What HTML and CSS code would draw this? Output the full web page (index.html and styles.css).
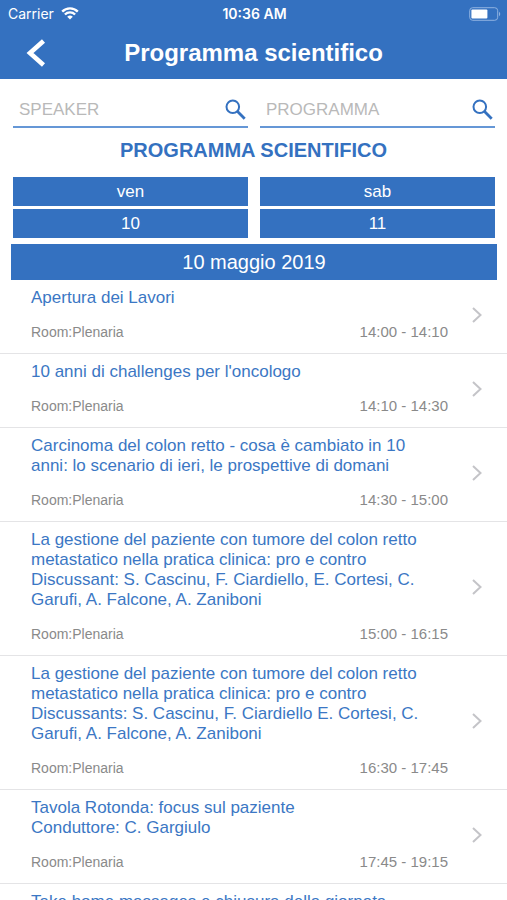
FILE: index.html
```html
<!DOCTYPE html>
<html lang="it">
<head>
  <meta charset="UTF-8" />
  <meta name="viewport" content="width=device-width, initial-scale=1.0"/>
  <title>Programma scientifico</title>
  <link rel="stylesheet" href="styles.css">
</head>
<body>
  <header class="header">
    <div class="status-bar">
      <div class="carrier">
        <span>Carrier</span>
        <svg width="18" height="13" viewBox="0 0 18 13" fill="none" stroke="#fff" stroke-width="2.4">
          <path d="M1.2 4.6a11 11 0 0 1 15.6 0"/>
          <path d="M3.9 7.5a7.2 7.2 0 0 1 10.2 0"/>
          <path d="M9 12.6L6.2 9.8a4 4 0 0 1 5.6 0z" fill="#fff" stroke="none"/>
        </svg>
      </div>
      <div class="clock">10:36 AM</div>
      <div class="battery">
        <svg width="32" height="14" viewBox="0 0 32 14">
          <rect x="0.7" y="0.7" width="28" height="12.6" rx="3" fill="none" stroke="#8fb2e0" stroke-width="1"/>
          <rect x="2.4" y="2.4" width="16" height="9.2" rx="1" fill="#fff"/>
          <path d="M30 4.8c1.7 0.8 1.7 3.6 0 4.4z" fill="#8fb2e0"/>
        </svg>
      </div>
    </div>
    <div class="nav-bar">
      <button class="back" type="button" aria-label="Indietro">
        <svg width="20" height="28" viewBox="0 0 20 28" fill="none" stroke="#fff" stroke-width="4.6">
          <path d="M17.5 2L4 14l13.5 12"/>
        </svg>
      </button>
      <h1>Programma scientifico</h1>
    </div>
  </header>

  <main class="content">
    <form class="search">
      <div class="field">
        <input type="text" placeholder="SPEAKER" aria-label="Speaker">
        <button type="button" aria-label="Cerca speaker">
          <svg width="21" height="21" viewBox="0 0 21 21" fill="none" stroke="#3471c0">
            <circle cx="7.8" cy="7.8" r="6.3" stroke-width="2"/>
            <path d="M12.3 12.3L19.7 19.7" stroke-width="2.8"/>
          </svg>
        </button>
      </div>
      <div class="field">
        <input type="text" placeholder="PROGRAMMA" aria-label="Programma">
        <button type="button" aria-label="Cerca programma">
          <svg width="21" height="21" viewBox="0 0 21 21" fill="none" stroke="#3471c0">
            <circle cx="7.8" cy="7.8" r="6.3" stroke-width="2"/>
            <path d="M12.3 12.3L19.7 19.7" stroke-width="2.8"/>
          </svg>
        </button>
      </div>
    </form>

    <h2>PROGRAMMA SCIENTIFICO</h2>

    <div class="days">
      <button class="day" type="button"><span>ven</span><span>10</span></button>
      <button class="day" type="button"><span>sab</span><span>11</span></button>
    </div>

    <h3 class="date">10 maggio 2019</h3>

    <div class="sessions">
      <a class="session" href="#">
        <div class="info">
          <div class="title">Apertura dei Lavori</div>
          <div class="meta"><span>Room:Plenaria</span><span class="time">14:00 - 14:10</span></div>
        </div>
        <svg class="chevron" viewBox="0 0 10 16"><path d="M1 1l7.5 7L1 15"/></svg>
      </a>
      <a class="session" href="#">
        <div class="info">
          <div class="title">10 anni di challenges per l'oncologo</div>
          <div class="meta"><span>Room:Plenaria</span><span class="time">14:10 - 14:30</span></div>
        </div>
        <svg class="chevron" viewBox="0 0 10 16"><path d="M1 1l7.5 7L1 15"/></svg>
      </a>
      <a class="session" href="#">
        <div class="info">
          <div class="title">Carcinoma del colon retto - cosa è cambiato in 10 anni: lo scenario di ieri, le prospettive di domani</div>
          <div class="meta"><span>Room:Plenaria</span><span class="time">14:30 - 15:00</span></div>
        </div>
        <svg class="chevron" viewBox="0 0 10 16"><path d="M1 1l7.5 7L1 15"/></svg>
      </a>
      <a class="session" href="#">
        <div class="info">
          <div class="title">La gestione del paziente con tumore del colon retto metastatico nella pratica clinica: pro e contro<br>Discussant: S. Cascinu, F. Ciardiello, E. Cortesi, C. Garufi, A. Falcone, A. Zaniboni</div>
          <div class="meta"><span>Room:Plenaria</span><span class="time">15:00 - 16:15</span></div>
        </div>
        <svg class="chevron" viewBox="0 0 10 16"><path d="M1 1l7.5 7L1 15"/></svg>
      </a>
      <a class="session" href="#">
        <div class="info">
          <div class="title">La gestione del paziente con tumore del colon retto metastatico nella pratica clinica: pro e contro<br>Discussants: S. Cascinu, F. Ciardiello E. Cortesi, C. Garufi, A. Falcone, A. Zaniboni</div>
          <div class="meta"><span>Room:Plenaria</span><span class="time">16:30 - 17:45</span></div>
        </div>
        <svg class="chevron" viewBox="0 0 10 16"><path d="M1 1l7.5 7L1 15"/></svg>
      </a>
      <a class="session" href="#">
        <div class="info">
          <div class="title">Tavola Rotonda: focus sul paziente<br>Conduttore: C. Gargiulo</div>
          <div class="meta"><span>Room:Plenaria</span><span class="time">17:45 - 19:15</span></div>
        </div>
        <svg class="chevron" viewBox="0 0 10 16"><path d="M1 1l7.5 7L1 15"/></svg>
      </a>
      <a class="session" href="#">
        <div class="info">
          <div class="title">Take home massages e chiusura della giornata</div>
        </div>
      </a>
    </div>
  </main>
</body>
</html>
```

FILE: styles.css
```css
* {
  box-sizing: border-box;
}

body {
  font-family: "Liberation Sans", Arial, sans-serif;
  background-color: #fff;
  color: #3471c0;
  display: flex;
  flex-direction: column;
  height: 100vh;
  margin: 0;
}

h1, h2, h3 {
  margin: 0;
}

button {
  border: none;
  background: none;
  padding: 0;
  font-family: inherit;
  cursor: pointer;
}

svg {
  display: block;
}

/* header */

.header {
  background-color: #3471c0;
  color: #fff;
}

.status-bar {
  display: grid;
  grid-template-columns: 1fr auto 1fr;
  align-items: center;
  height: 27px;
  padding: 0 6px 0 8px;
  font-family: Inter, sans-serif;
  font-size: 14px;
}

.carrier {
  display: flex;
  align-items: center;
  gap: 7px;
}

.clock {
  font-weight: 600;
}

.battery {
  display: flex;
  justify-content: flex-end;
}

.nav-bar {
  display: grid;
  grid-template-columns: 46px 1fr 46px;
  align-items: center;
  height: 52px;
}

.back {
  display: flex;
  justify-content: flex-end;
}

.nav-bar h1 {
  font-size: 24px;
  line-height: 28px;
  text-align: center;
}

/* content */

.content {
  flex: 1;
  overflow-y: auto;
  scrollbar-width: none;
}

.search, .days {
  display: grid;
  grid-template-columns: repeat(2, minmax(0, 1fr));
  gap: 12px;
  padding: 0 12px 0 13px;
}

.search {
  padding-top: 13px;
}

.field {
  display: flex;
  align-items: center;
  height: 36px;
  padding: 0 2px 0 6px;
  border-bottom: 2px solid #6597d6;
}

.field input {
  flex: 1;
  min-width: 0;
  border: none;
  outline: none;
  padding: 2px 0 0;
  background: none;
  color: #3471c0;
  font-family: inherit;
  font-size: 17px;
}

.field input::placeholder {
  color: #b9b9b9;
}

h2 {
  margin: 10px 0 15px;
  font-size: 20px;
  line-height: 24px;
  text-align: center;
}

.day {
  display: flex;
  flex-direction: column;
  gap: 3px;
  color: #fff;
  font-size: 17px;
  line-height: 29px;
}

.day span {
  width: 100%;
  background-color: #3471c0;
}

.date {
  margin: 6px 10px 0 11px;
  background-color: #3471c0;
  color: #fff;
  font-size: 20px;
  font-weight: normal;
  line-height: 36px;
  text-align: center;
}

/* sessions */

.session {
  display: flex;
  align-items: center;
  padding: 8px 25px 11px 31px;
  border-bottom: 1px solid #e4e4e6;
  color: #3b77c4;
  text-decoration: none;
}

.info {
  flex: 1;
  padding-right: 24px;
}

.title {
  padding-right: 20px;
  font-size: 17px;
  line-height: 20px;
}

.meta {
  display: flex;
  justify-content: space-between;
  margin-top: 14px;
  color: #8a8a8a;
  font-size: 14px;
  line-height: 20px;
}

.time {
  font-size: 15px;
}

.chevron {
  width: 10px;
  height: 16px;
  fill: none;
  stroke: #c4c4c8;
  stroke-width: 2;
}
```
